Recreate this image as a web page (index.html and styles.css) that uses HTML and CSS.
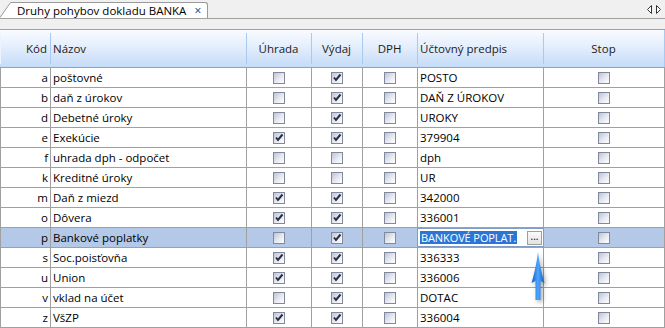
FILE: index.html
```html
<!DOCTYPE html>
<html lang="sk">
<head>
    <meta charset="UTF-8">
    <title>Druhy pohybov dokladu BANKA</title>
    <link rel="stylesheet" href="styles.css">
</head>
<body>
<div class="page">
    <div class="tabbar">
        <div class="tab">
            <svg class="tab-slant" width="11" height="16" viewBox="0 0 11 16">
                <path d="M0 16 L10.5 0.5 L11 0.5 L11 16 Z" fill="#fff"/>
                <path d="M0 15.5 L10.5 0.5 L11 0.5" fill="none" stroke="#9a9a9a" stroke-width="1"/>
            </svg>
            <div class="tab-label">Druhy pohybov dokladu BANKA<span class="tab-close">×</span></div>
        </div>
        <svg class="scroller" width="16" height="9" viewBox="0 0 16 9">
            <path d="M5.5 0.5 L1.5 4.5 L5.5 8.5 Z" fill="#fff" stroke="#333" stroke-width="1"/>
            <path d="M10.5 0.5 L14.5 4.5 L10.5 8.5 Z" fill="#fff" stroke="#333" stroke-width="1"/>
        </svg>
    </div>
    <div class="band"></div>

    <div class="head">
        <div class="hc right first">Kód</div>
        <div class="hc">Názov</div>
        <div class="hc center">Úhrada</div>
        <div class="hc center">Výdaj</div>
        <div class="hc center">DPH</div>
        <div class="hc">Účtovný predpis</div>
        <div class="hc center">Stop</div>
    </div>

    <div class="rows">
        <div class="c code">a</div><div class="c">poštovné</div>
        <div class="c chk"><span class="cb"></span></div><div class="c chk"><span class="cb on"></span></div><div class="c chk"><span class="cb"></span></div>
        <div class="c">POSTO</div><div class="c chk"><span class="cb"></span></div>

        <div class="c code">b</div><div class="c">daň z úrokov</div>
        <div class="c chk"><span class="cb"></span></div><div class="c chk"><span class="cb on"></span></div><div class="c chk"><span class="cb"></span></div>
        <div class="c">DAŇ Z ÚROKOV</div><div class="c chk"><span class="cb"></span></div>

        <div class="c code">d</div><div class="c">Debetné úroky</div>
        <div class="c chk"><span class="cb"></span></div><div class="c chk"><span class="cb on"></span></div><div class="c chk"><span class="cb"></span></div>
        <div class="c">UROKY</div><div class="c chk"><span class="cb"></span></div>

        <div class="c code">e</div><div class="c">Exekúcie</div>
        <div class="c chk"><span class="cb on"></span></div><div class="c chk"><span class="cb on"></span></div><div class="c chk"><span class="cb"></span></div>
        <div class="c">379904</div><div class="c chk"><span class="cb"></span></div>

        <div class="c code">f</div><div class="c">uhrada dph - odpočet</div>
        <div class="c chk"><span class="cb"></span></div><div class="c chk"><span class="cb"></span></div><div class="c chk"><span class="cb"></span></div>
        <div class="c">dph</div><div class="c chk"><span class="cb"></span></div>

        <div class="c code">k</div><div class="c">Kreditné úroky</div>
        <div class="c chk"><span class="cb"></span></div><div class="c chk"><span class="cb"></span></div><div class="c chk"><span class="cb"></span></div>
        <div class="c">UR</div><div class="c chk"><span class="cb"></span></div>

        <div class="c code">m</div><div class="c">Daň z miezd</div>
        <div class="c chk"><span class="cb on"></span></div><div class="c chk"><span class="cb on"></span></div><div class="c chk"><span class="cb"></span></div>
        <div class="c">342000</div><div class="c chk"><span class="cb"></span></div>

        <div class="c code">o</div><div class="c">Dôvera</div>
        <div class="c chk"><span class="cb on"></span></div><div class="c chk"><span class="cb on"></span></div><div class="c chk"><span class="cb"></span></div>
        <div class="c">336001</div><div class="c chk"><span class="cb"></span></div>

        <div class="c code sel">p</div><div class="c sel">Bankové poplatky</div>
        <div class="c chk sel"><span class="cb"></span></div><div class="c chk sel"><span class="cb on"></span></div><div class="c chk sel"><span class="cb"></span></div>
        <div class="c sel edit-cell">
            <div class="editor"><span class="picked">BANKOVÉ POPLAT.</span><span class="dots">...</span></div>
        </div>
        <div class="c chk sel"><span class="cb"></span></div>

        <div class="c code">s</div><div class="c">Soc.poisťovňa</div>
        <div class="c chk"><span class="cb on"></span></div><div class="c chk"><span class="cb on"></span></div><div class="c chk"><span class="cb"></span></div>
        <div class="c">336333</div><div class="c chk"><span class="cb"></span></div>

        <div class="c code">u</div><div class="c">Union</div>
        <div class="c chk"><span class="cb on"></span></div><div class="c chk"><span class="cb on"></span></div><div class="c chk"><span class="cb"></span></div>
        <div class="c">336006</div><div class="c chk"><span class="cb"></span></div>

        <div class="c code">v</div><div class="c">vklad na účet</div>
        <div class="c chk"><span class="cb"></span></div><div class="c chk"><span class="cb on"></span></div><div class="c chk"><span class="cb"></span></div>
        <div class="c">DOTAC</div><div class="c chk"><span class="cb"></span></div>

        <div class="c code">z</div><div class="c">VšZP</div>
        <div class="c chk"><span class="cb on"></span></div><div class="c chk"><span class="cb on"></span></div><div class="c chk"><span class="cb"></span></div>
        <div class="c">336004</div><div class="c chk"><span class="cb"></span></div>
    </div>

    <!-- ukazovatel na tlacidlo vyberu -->
    <svg class="pointer" width="22" height="52" viewBox="0 0 22 52">
        <defs>
            <linearGradient id="arrowFill" x1="0" y1="0" x2="1" y2="0">
                <stop offset="0" stop-color="#0f5cc4"/>
                <stop offset="0.5" stop-color="#4ea6ff"/>
                <stop offset="1" stop-color="#0f5cc4"/>
            </linearGradient>
        </defs>
        <path d="M11 1 C12 10 14.5 22 17.5 32 L13.5 30 L13.5 49 L8.5 49 L8.5 30 L4.5 32 C7.5 22 10 10 11 1 Z" fill="url(#arrowFill)"/>
    </svg>
</div>
</body>
</html>
```

FILE: styles.css
```css
body {
    margin: 0;
    padding: 0;
    background: #fff;
    font-family: "Open Sans", "Noto Sans", sans-serif;
    font-size: 11.5px;
    color: #000;
}
.page {
    position: relative;
    width: 665px;
    height: 328px;
    overflow: hidden;
}

/* tab strip */
.tabbar {
    display: flex;
    justify-content: space-between;
    align-items: flex-end;
    height: 18px;
    background: #f0f0f0;
    border-bottom: 1px solid #a0a0a0;
}
.tab {
    display: flex;
    align-items: flex-end;
    height: 16px;
}
.tab-slant {
    display: block;
}
.tab-label {
    height: 15px;
    padding: 0 6px 0 6px;
    line-height: 15px;
    background: #fff;
    border-top: 1px solid #9a9a9a;
    border-right: 1px solid #9a9a9a;
    border-top-right-radius: 3px;
    white-space: nowrap;
}
.tab-close {
    margin-left: 8px;
    font-size: 12px;
    color: #333;
}
.scroller {
    align-self: center;
    margin-right: 3px;
}
.band {
    height: 10px;
    background: #f0f0f0;
    border-bottom: 1px solid #a0a0a0;
}

/* header */
.head {
    display: grid;
    grid-template-columns: 50px 196px 65px 51px 55px 126px 121px;
    width: 664px;
    height: 37px;
    border-right: 1px solid #a9c9f1;
    background: linear-gradient(#f9fbff 0%, #e4eefc 45%, #c4dbf8 100%);
}
.hc {
    padding: 0 3px;
    line-height: 37px;
    white-space: nowrap;
    color: #1b1b1b;
    background-image: linear-gradient(#a9c9f1, #a9c9f1);
    background-repeat: no-repeat;
    background-position: left center;
    background-size: 1px 31px;
}
.hc.first {
    background-image: linear-gradient(#eef4fd, #eef4fd);
}
.right {
    text-align: right;
}
.center {
    text-align: center;
}

/* rows */
.rows {
    display: grid;
    grid-template-columns: 49px 195px 64px 50px 54px 125px 120px;
    grid-auto-rows: 19px;
    gap: 1px;
    padding: 1px;
    width: 663px;
    background: #a0a0a0;
}
.c {
    padding: 0 2px;
    line-height: 19px;
    white-space: nowrap;
    overflow: hidden;
    background: #fff;
}
.c.code {
    text-align: right;
}
.c.chk {
    display: flex;
    align-items: center;
    justify-content: center;
}
.c.sel {
    background: #b4c8e8;
}
.cb {
    width: 10px;
    height: 10px;
    border: 1px solid #7f889c;
    background: linear-gradient(135deg, #bfc4d2 0%, #e8eaf2 55%, #ffffff 100%);
}
.cb.on {
    background:
        url("data:image/svg+xml,%3Csvg xmlns='http://www.w3.org/2000/svg' width='10' height='10'%3E%3Cpath d='M2 4.5 L4 7 L8.5 1.5' fill='none' stroke='%23283040' stroke-width='2'/%3E%3C/svg%3E") no-repeat center,
        linear-gradient(135deg, #bfc4d2 0%, #e8eaf2 55%, #ffffff 100%);
}

/* editing cell */
.c.edit-cell {
    padding: 0;
    overflow: visible;
}
.editor {
    display: flex;
    align-items: center;
    justify-content: space-between;
    height: 17px;
    margin: 0 -1px;
    padding: 0 1px 0 2px;
    background: #fff;
    border: 1px solid #7f9dc6;
}
.picked {
    flex-shrink: 0;
    padding: 0 1px;
    line-height: 13px;
    font-size: 11px;
    letter-spacing: -0.1px;
    background: #2b75d6;
    color: #fff;
}
.dots {
    flex-shrink: 0;
    width: 13px;
    height: 12px;
    line-height: 9px;
    text-align: center;
    font-size: 10px;
    border: 1px solid #a0a0a0;
    background: linear-gradient(#fbfbfb, #e2e2e2);
}

.pointer {
    position: absolute;
    left: 527px;
    top: 251px;
    filter: drop-shadow(2px 2px 2px rgba(0, 0, 0, 0.35));
}
```
